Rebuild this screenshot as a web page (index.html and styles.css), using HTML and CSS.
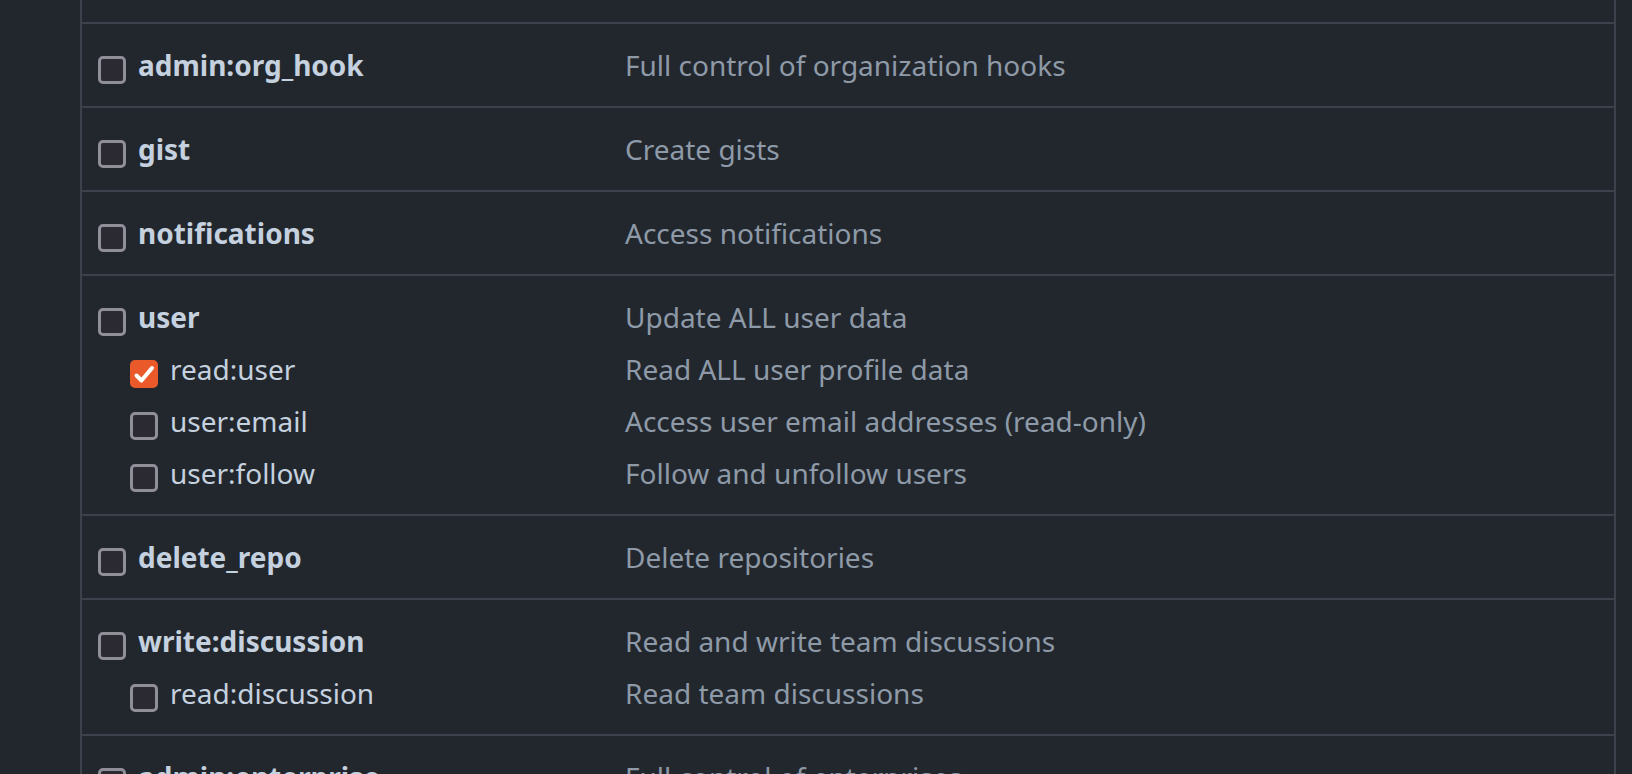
FILE: index.html
```html
<!DOCTYPE html>
<html>
<head>
<meta charset="utf-8">
<link rel="stylesheet" href="styles.css">
</head>
<body>
<div class="page">
  <div class="scopes">
    <div class="scope tail"></div>

    <div class="scope">
      <div class="line main"><span class="name"><span class="cb"></span>admin:org_hook</span><span class="desc">Full control of organization hooks</span></div>
    </div>

    <div class="scope">
      <div class="line main"><span class="name"><span class="cb"></span>gist</span><span class="desc">Create gists</span></div>
    </div>

    <div class="scope">
      <div class="line main"><span class="name"><span class="cb"></span>notifications</span><span class="desc">Access notifications</span></div>
    </div>

    <div class="scope">
      <div class="line main"><span class="name"><span class="cb"></span>user</span><span class="desc">Update ALL user data</span></div>
      <div class="line sub"><span class="name"><span class="cb checked"><svg viewBox="0 0 28 28" width="28" height="28"><path d="M6.5 15.5 L11.5 20.5 L22 8" fill="none" stroke="#ffffff" stroke-width="4" stroke-linecap="round" stroke-linejoin="round"/></svg></span>read:user</span><span class="desc">Read ALL user profile data</span></div>
      <div class="line sub"><span class="name"><span class="cb"></span>user:email</span><span class="desc">Access user email addresses (read-only)</span></div>
      <div class="line sub"><span class="name"><span class="cb"></span>user:follow</span><span class="desc">Follow and unfollow users</span></div>
    </div>

    <div class="scope">
      <div class="line main"><span class="name"><span class="cb"></span>delete_repo</span><span class="desc">Delete repositories</span></div>
    </div>

    <div class="scope">
      <div class="line main"><span class="name"><span class="cb"></span>write:discussion</span><span class="desc">Read and write team discussions</span></div>
      <div class="line sub"><span class="name"><span class="cb"></span>read:discussion</span><span class="desc">Read team discussions</span></div>
    </div>

    <div class="scope">
      <div class="line main"><span class="name"><span class="cb"></span>admin:enterprise</span><span class="desc">Full control of enterprises</span></div>
    </div>
  </div>
</div>
</body>
</html>
```

FILE: styles.css
```css
html, body {
  margin: 0;
  padding: 0;
  background: #22272e;
  height: 100%;
  overflow: hidden;
}

body {
  font-family: "Noto Sans", "Open Sans", sans-serif;
  font-size: 28px;
  color: #c5d1de;
}

.page {
  padding: 0 16px 0 80px;
}

.scopes {
  border-left: 2px solid #3b424b;
  border-right: 2px solid #3b424b;
}

.scope {
  border-top: 2px solid #3b424b;
  padding: 20px 16px 20px 16px;
}

.scope.tail {
  border-top: none;
  height: 22px;
  padding: 0;
  box-sizing: border-box;
}

.line {
  display: grid;
  grid-template-columns: 527px 1fr;
  line-height: 42px;
}

.line.sub {
  margin-top: 10px;
}

.name {
  display: flex;
  align-items: flex-start;
  gap: 12px;
  white-space: nowrap;
}

.main .name {
  font-weight: 700;
}

.sub .name {
  padding-left: 32px;
  font-weight: 400;
}

.desc {
  color: #8e9aa7;
  white-space: nowrap;
}

.cb {
  flex: none;
  box-sizing: border-box;
  width: 28px;
  height: 28px;
  margin-top: 12px;
  border: 3px solid #8f8e99;
  border-radius: 5px;
  background: #2b2a33;
}

.cb.checked {
  border: none;
  background: #e9592a;
  display: flex;
}

.cb.checked svg {
  display: block;
}
```
